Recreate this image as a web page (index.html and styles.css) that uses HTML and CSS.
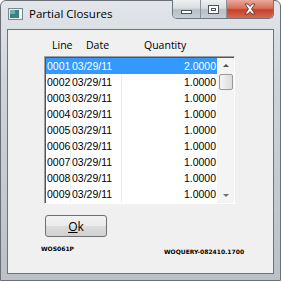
FILE: index.html
```html
<!DOCTYPE html>
<html lang="en">
<head>
    <meta charset="UTF-8">
    <title>Partial Closures</title>
    <link rel="stylesheet" href="styles.css">
</head>
<body>

    <div class="window">
        <div class="titlebar">
            <svg class="app-icon" width="15" height="12" viewBox="0 0 15 12">
                <rect x="0.5" y="0.5" width="14" height="11" fill="#e8ecef" stroke="#7d8790"/>
                <rect x="2" y="2" width="9" height="8" fill="#3f7f86"/>
                <rect x="2" y="2" width="5" height="4" fill="#6fb0a8"/>
                <rect x="12" y="2" width="1.5" height="5" fill="#fff"/>
                <rect x="12" y="8" width="1.5" height="1.5" fill="#fff"/>
            </svg>
            <span class="title">Partial Closures</span>
            <div class="controls">
                <div class="ctl ctl-min"><span class="glyph-min"></span></div>
                <div class="ctl ctl-max"><span class="glyph-max"></span></div>
                <div class="ctl ctl-close">
                    <svg width="14" height="12" viewBox="0 0 14 12">
                        <path d="M2 1 L5 1 L7 3.5 L9 1 L12 1 L8.5 6 L12 11 L9 11 L7 8.5 L5 11 L2 11 L5.5 6 Z" fill="#fff" stroke="#5a2a22" stroke-width="0.8"/>
                    </svg>
                </div>
            </div>
        </div>

        <div class="client">
            <div class="list-head">
                <span class="h-line">Line</span>
                <span class="h-date">Date</span>
                <span class="h-qty">Quantity</span>
            </div>

            <div class="listbox">
                <div class="rows" id="rows"></div>
                <div class="scrollbar">
                    <span class="arrow-up"></span>
                    <span class="thumb"></span>
                    <span class="track"></span>
                    <span class="arrow-down"></span>
                </div>
            </div>

            <button class="ok-btn"><u>O</u>k</button>

            <div class="footer">
                <span class="form-id">WOS061P</span>
                <span class="query-id">WOQUERY-082410.1700</span>
            </div>
        </div>
    </div>

    <script>
        const rows = [
            { line: "0001", date: "03/29/11", qty: "2.0000" },
            { line: "0002", date: "03/29/11", qty: "1.0000" },
            { line: "0003", date: "03/29/11", qty: "1.0000" },
            { line: "0004", date: "03/29/11", qty: "1.0000" },
            { line: "0005", date: "03/29/11", qty: "1.0000" },
            { line: "0006", date: "03/29/11", qty: "1.0000" },
            { line: "0007", date: "03/29/11", qty: "1.0000" },
            { line: "0008", date: "03/29/11", qty: "1.0000" },
            { line: "0009", date: "03/29/11", qty: "1.0000" }
        ];

        const rowsDiv = document.getElementById("rows");
        rows.forEach((r, i) => {
            const row = document.createElement("div");
            row.className = "row" + (i === 0 ? " selected" : "");
            row.innerHTML =
                '<span class="c-line">' + r.line + '</span>' +
                '<span class="c-date">' + r.date + '</span>' +
                '<span class="c-qty">' + r.qty + '</span>';
            rowsDiv.appendChild(row);
        });
    </script>

</body>
</html>
```

FILE: styles.css
```css
* { box-sizing: border-box; }
body {
    margin: 0;
    width: 282px;
    height: 282px;
    overflow: hidden;
    background: #fff;
    font-family: "Open Sans", "Liberation Sans", sans-serif;
}
.window {
    width: 281px;
    height: 281px;
    border: 1px solid #6b7078;
    border-radius: 6px 6px 0 0;
    background: linear-gradient(to bottom, #e2e6ea 0%, #cfd4d9 30%, #bcc1c6 100%);
    padding: 0 6px 6px 6px;
    display: flex;
    flex-direction: column;
}
.titlebar {
    height: 28px;
    display: flex;
    align-items: flex-start;
}
.app-icon { margin-top: 7px; margin-left: 1px; }
.title {
    margin-top: 5px;
    margin-left: 6px;
    font-size: 11.5px;
    color: #000;
}
.controls {
    margin-left: auto;
    margin-top: -1px;
    display: flex;
    border: 1px solid #6f7780;
    border-top: none;
    border-radius: 0 0 5px 5px;
    overflow: hidden;
    height: 19px;
}
.ctl {
    display: flex;
    align-items: center;
    justify-content: center;
    height: 18px;
}
.ctl-min, .ctl-max {
    background: linear-gradient(to bottom, #eef0f2 0%, #d9dde1 45%, #b9bfc6 55%, #c9ced3 100%);
    border-right: 1px solid #8a9199;
}
.ctl-min { width: 28px; }
.ctl-max { width: 26px; }
.ctl-close {
    width: 46px;
    background: linear-gradient(to bottom, #e8a99a 0%, #d8725c 45%, #c5412a 55%, #d66a4f 100%);
}
.glyph-min {
    width: 11px;
    height: 4px;
    margin-top: 5px;
    background: #fff;
    border: 1px solid #4c535a;
}
.glyph-max {
    width: 11px;
    height: 9px;
    border: 1px solid #4c535a;
    background: #fff;
    box-shadow: inset 0 0 0 2px #fff, inset 0 0 0 3px #4c535a;
}
.client {
    flex: 1;
    background: #f0f0f0;
    border: 1px solid #6e747b;
    padding: 8px 0 0 36px;
    display: flex;
    flex-direction: column;
}
.list-head {
    display: flex;
    height: 14px;
    line-height: 14px;
    font-size: 10.5px;
    color: #000;
    padding-left: 8px;
}
.h-line { width: 34px; }
.h-date { width: 58px; }
.listbox {
    margin-top: 4px;
    width: 191px;
    height: 148px;
    display: flex;
    border-top: 1px solid #a0a0a0;
    border-left: 1px solid #a0a0a0;
    border-right: 1px solid #fff;
    border-bottom: 1px solid #fff;
    background: #fff;
    box-shadow: inset 1px 1px 0 #555;
}
.rows {
    width: 172px;
    padding-top: 1px;
    padding-left: 1px;
}
.row {
    display: flex;
    height: 16px;
    line-height: 16px;
    font-family: "Liberation Sans", Arial, sans-serif;
    font-size: 10.5px;
    color: #000;
}
.row span { height: 16px; }
.c-line { width: 25px; padding-left: 1px; border-right: 1px solid #ececec; }
.c-date { width: 51px; padding-left: 1px; border-right: 1px solid #ececec; }
.c-qty { flex: 1; text-align: right; padding-right: 1px; }
.row.selected { background: #3399ff; color: #fff; }
.row.selected span { border-right-color: #3399ff; }
.scrollbar {
    width: 17px;
    margin-top: 1px;
    background: #f4f4f4;
    display: flex;
    flex-direction: column;
    align-items: center;
}
.arrow-up, .arrow-down {
    width: 0;
    height: 0;
    border-left: 3px solid transparent;
    border-right: 3px solid transparent;
}
.arrow-up { border-bottom: 3px solid #505050; margin-top: 6px; }
.arrow-down { border-top: 3px solid #707070; margin-bottom: 6px; }
.thumb {
    width: 14px;
    height: 16px;
    margin-top: 7px;
    border: 1px solid #9a9a9a;
    border-radius: 2px;
    background: linear-gradient(to right, #f4f4f4, #dcdcdc);
}
.track { flex: 1; }
.ok-btn {
    margin-top: 11px;
    margin-left: 1px;
    width: 62px;
    height: 22px;
    padding: 0;
    border: 1px solid #707070;
    border-radius: 3px;
    background: linear-gradient(to bottom, #f2f2f2 0%, #ebebeb 50%, #dddddd 50%, #cfcfcf 100%);
    font-family: "Open Sans", "Liberation Sans", sans-serif;
    font-size: 12px;
    color: #000;
}
.footer {
    display: flex;
    margin-top: 8px;
    margin-left: -3px;
    font-family: "DejaVu Sans", sans-serif;
    font-weight: bold;
    font-size: 6px;
    color: #000;
}
.form-id { width: 123px; }
.query-id { margin-top: 3px; }
```
